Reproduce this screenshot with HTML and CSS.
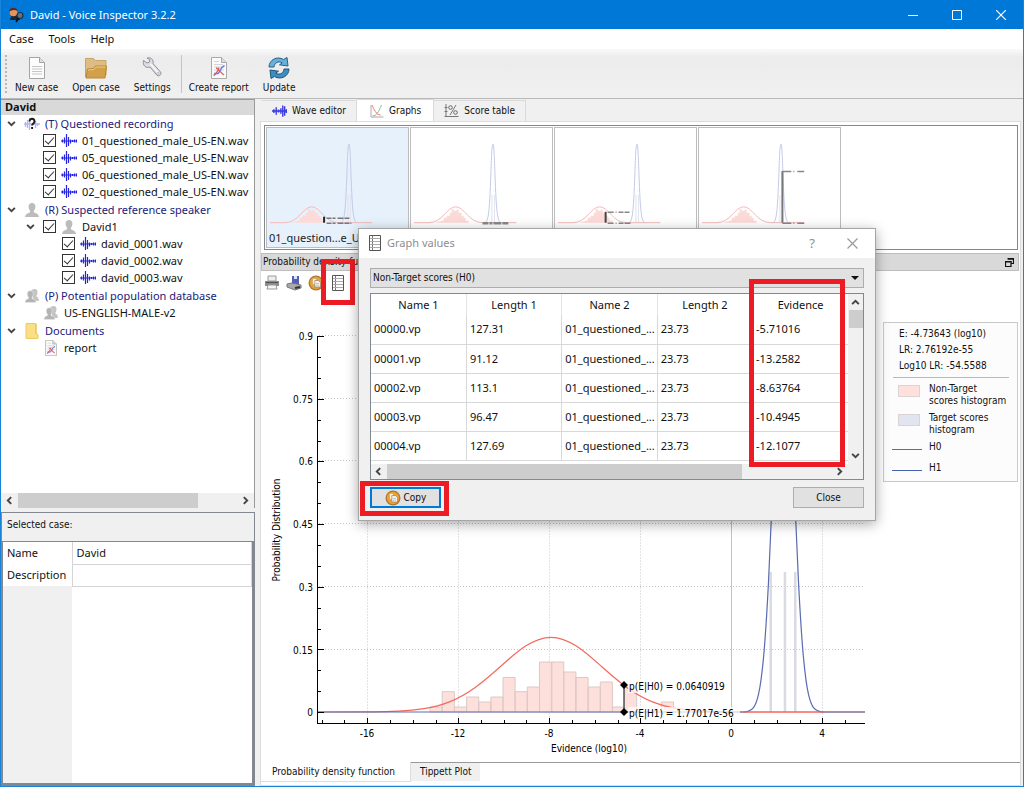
FILE: index.html
```html
<!DOCTYPE html>
<html lang="en">
<head>
<meta charset="utf-8">
<meta name="viewport" content="width=device-width, initial-scale=1">
<title>David - Voice Inspector 3.2.2</title>
<link rel="stylesheet" href="styles.css">
</head>
<body>
<svg class="defs" aria-hidden="true">
  <defs>
    <symbol id="wave" viewBox="0 0 16 14"><path d="M0 7h16M1.500 5.500v3M3.500 3.500v6M5.500 0v13M7.500 3v9M9.500 5.500v4M11.500 6v2M13.500 5.500v3M15.500 5.500v3" fill="none" stroke="#2424dc" stroke-width="1.200"/></symbol>
    <symbol id="wave-tab" viewBox="0 0 16 14"><path d="M0 7h16M2 5v4M4.500 3v8M7 5.500v3M9.500 4v6M11.500 1v12M13.500 2v10M15.300 5v4" fill="none" stroke="#3a3ae0" stroke-width="1.500"/></symbol>
    <symbol id="wave-q" viewBox="0 0 16 14"><path d="M0 7h16M1.500 5v5M3.500 3v8M5.500 1v12M11.500 4v7M13.500 6v3" fill="none" stroke="#b4b4f4" stroke-width="1.300"/><path d="M5.500 4.500c0-3.600 5-3.600 5 0 0 2-2.400 1.900-2.400 4M8.100 10v2" fill="none" stroke="#1c1c1c" stroke-width="1.900"/></symbol>
    <symbol id="person" viewBox="0 0 14 14"><path d="M7 0c2.500 0 3.700 1.700 3.400 4.200-.2 2-1 3-1.500 3.600v1.400c1 1 4.600.9 5.100 4.800H0c.5-3.900 4.100-3.800 5.100-4.800V7.800C4.600 7.200 3.800 6.200 3.600 4.200 3.300 1.700 4.500 0 7 0z" fill="#bcbcbc"/></symbol>
    <symbol id="people" viewBox="0 0 14 14"><path d="M9.500 0c2.400 0 3.200 1.600 3 3.800-.2 1.500-.7 2.300-1 2.700v1c1 .8 2.300 1 2.500 4.200l-5 .5L6 3c.2-1.800 1.500-3 3.500-3z" fill="#c4c4c4"/><path d="M5.200 1.800c2.200 0 3.200 1.500 3 3.500-.1 1.500-.7 2.400-1.200 2.900v1.200c1 .8 3.700.8 4 4.100H0c.3-3.300 2.600-3.300 3.500-4.100V8.200C3 7.700 2.400 6.800 2.300 5.300c-.2-2 .8-3.500 2.900-3.500z" fill="#b4b4b4" stroke="#e8e8e8" stroke-width=".6"/></symbol>
    <symbol id="yellow" viewBox="0 0 13 16"><path d="M.5.500h10v10l2 1v4H.5z" fill="#fbdf86" stroke="#edca61"/><path d="M10.500 1v10" stroke="#e6bf55"/></symbol>
    <symbol id="report" viewBox="0 0 18 22"><path d="M1.500.500h10l5 5v16h-15z" fill="#fafafa" stroke="#a9a9a9"/><path d="M11.500.500v5h5" fill="#ddd" stroke="#a9a9a9"/><path d="M4 4.500h5M4 7.500h9M4 10h10M4 13h10" stroke="#d4d4d4"/><path d="M3.500 18.500c3-1 4-4 5.500-8M6 11c2 0 5 5 8 7" fill="none" stroke="#f05a5a" stroke-width="1.400"/><path d="M4 16.500h4c2-1 2-6 6.500-8" fill="none" stroke="#6680e8" stroke-width="1.400"/></symbol>
    <symbol id="sheet" viewBox="0 0 12 16"><path d="M.5.500h11v15H.5z" fill="#fff" stroke="#555"/><path d="M3.500 1v14" stroke="#777"/><path d="M1 3.500h10M1 6.500h10M1 9.500h10M1 12.500h10" stroke="#aaa"/></symbol>
    <symbol id="copy" viewBox="0 0 16 16"><circle cx="8" cy="8" r="7.500" fill="#a9783a"/><circle cx="8" cy="8" r="6.200" fill="#ee9f30"/><path d="M4.500 3.500h4v6h-4z" fill="#fff0cf" stroke="#c9a36a" stroke-width=".7"/><path d="M6.800 5.500h3.700l2 2v4.500H6.800z" fill="#f3f1ec" stroke="#97846a" stroke-width=".7"/><path d="M8 8.500h3M8 10.200h3" stroke="#aaa" stroke-width=".6"/></symbol>
    <symbol id="thumb" viewBox="0 0 142 100"><path d="M26 95v-1h4v-1h3v-3h3v-2h3v-3h2v-4h2v2h3v-1h2v3h3v3h2v2h2v3h3v2z" fill="#fbdad8"/><path d="M81 67h1v28h-1zM83.500 67h1v28h-1z" fill="#e1e3ee"/><path d="M3 95h15C32 95 36 79 45 79S58 95 72 95h34" fill="none" stroke="#f3b9b9"/><path d="M74 95c4 0 5-10 6.500-50 1-39 3-39 4 0 1.500 40 2.500 50 6.500 50" fill="none" stroke="#c4cae6"/></symbol>
    <symbol id="left" viewBox="0 0 8 8"><path d="M5.500 1l-3 3 3 3" fill="none" stroke="#444" stroke-width="1.700"/></symbol>
    <symbol id="right" viewBox="0 0 8 8"><path d="M2.500 1l3 3-3 3" fill="none" stroke="#444" stroke-width="1.700"/></symbol>
    <symbol id="up" viewBox="0 0 8 8"><path d="M1 5.500l3-3 3 3" fill="none" stroke="#444" stroke-width="1.700"/></symbol>
    <symbol id="down" viewBox="0 0 8 8"><path d="M1 2.500l3 3 3-3" fill="none" stroke="#444" stroke-width="1.700"/></symbol>
  </defs>
</svg>

<div class="window">
  <header class="titlebar">
    <svg class="app-icon" viewBox="0 0 16 16" aria-hidden="true"><path d="M2 13c0-4 3-5 5-5s5 2 5 5z" fill="#1c2733"/><circle cx="5.500" cy="5.500" r="3.800" fill="#e8935a"/><path d="M1 4.500C1 0 9-1 9.500 4 7 2.500 4 3 1 4.500z" fill="#5a2d1a"/><circle cx="12" cy="8.500" r="3" fill="#5d7488" stroke="#26323c" stroke-width="1.200"/><path d="M10.500 11L8 15" stroke="#111" stroke-width="1.800"/></svg>
    <h1 class="title">David - Voice Inspector 3.2.2</h1>
    <div class="win-buttons">
      <button aria-label="Minimize"><svg viewBox="0 0 10 10"><path d="M0 5.500h10" stroke="#fff"/></svg></button>
      <button aria-label="Maximize"><svg viewBox="0 0 10 10"><path d="M.5.500h9v9h-9z" fill="none" stroke="#fff"/></svg></button>
      <button aria-label="Close window"><svg viewBox="0 0 10 10"><path d="M0 0l10 10M10 0L0 10" stroke="#fff" stroke-width="1.200"/></svg></button>
    </div>
  </header>

  <nav class="menu">
    <button>Case</button><button>Tools</button><button>Help</button>
  </nav>

  <div class="toolbar">
    <span class="grip"></span>
    <button class="tool"><svg viewBox="0 0 18 22"><path d="M1.500.500h10l5 5v16h-15z" fill="#fcfcfc" stroke="#a4a4a4"/><path d="M11.500.500v5h5" fill="#e0e0e0" stroke="#a4a4a4"/><path d="M4 9.500h10M4 12h10M4 14.500h10M4 17h10" stroke="#c6c6c6"/></svg>New case</button>
    <button class="tool"><svg class="wide" viewBox="0 0 24 22"><path d="M1.500 20V1.500h8l2 2H22V18z" fill="#dcbd83" stroke="#c9a464"/><path d="M2 21l1.500-9 6-.5 2-2.500H22.500L21 21z" fill="#d3a04a" stroke="#b98636"/><path d="M4 13l6-.5 2-2.500h9.500" fill="none" stroke="#edcb8c"/></svg>Open case</button>
    <button class="tool"><svg viewBox="0 0 20 22"><path d="M1.500 3.500l3.500 2.500 2.500-1 .3-2.700L5 1.200c3.500-1.500 7 1.300 6 5.300l7.500 8.500c1.500 2.500-1.500 5-3.500 3.300L8 10C4 11.500.3 8.500 1.500 3.500z" fill="#dedee4" stroke="#8f8f9a"/><path d="M8.500 7l7.500 8.500" stroke="#fafafa" stroke-width="1.500"/><circle cx="16" cy="16.500" r="1" fill="#fff" stroke="#888" stroke-width=".5"/></svg>Settings</button>
    <span class="tool-sep"></span>
    <button class="tool"><svg><use href="#report"/></svg>Create report</button>
    <button class="tool"><svg viewBox="0 0 22 22"><path d="M1 10C1 3 9-1.500 15.500 2.500L19 .5l1 8.500-8.500-1.200 2.700-2C10 3.500 6.500 6 6 10z" fill="#68b0d8" stroke="#28608a"/><path d="M21 12c0 7-8 11.500-14.500 7.500L3 21.500 2 13l8.500 1.200-2.700 2C12 18.500 15.500 16 16 12z" fill="#3d8cc2" stroke="#235578"/></svg>Update</button>
  </div>

  <div class="main">
    <aside class="side">
      <section class="tree-panel">
        <h2 class="side-title">David</h2>
        <ul class="tree">
          <li class="row group"><svg class="chev"><use href="#down"/></svg><svg class="ico"><use href="#wave-q"/></svg>(T) Questioned recording</li>
          <li class="row lvl1"><label><input type="checkbox" checked><svg class="ico"><use href="#wave"/></svg>01_questioned_male_US-EN.wav</label></li>
          <li class="row lvl1"><label><input type="checkbox" checked><svg class="ico"><use href="#wave"/></svg>05_questioned_male_US-EN.wav</label></li>
          <li class="row lvl1"><label><input type="checkbox" checked><svg class="ico"><use href="#wave"/></svg>06_questioned_male_US-EN.wav</label></li>
          <li class="row lvl1"><label><input type="checkbox" checked><svg class="ico"><use href="#wave"/></svg>02_questioned_male_US-EN.wav</label></li>
          <li class="row group"><svg class="chev"><use href="#down"/></svg><svg class="ico"><use href="#person"/></svg>(R) Suspected reference speaker</li>
          <li class="row lvl-person"><svg class="chev"><use href="#down"/></svg><label><input type="checkbox" checked><svg class="ico"><use href="#person"/></svg>David1</label></li>
          <li class="row lvl2"><label><input type="checkbox" checked><svg class="ico"><use href="#wave"/></svg>david_0001.wav</label></li>
          <li class="row lvl2"><label><input type="checkbox" checked><svg class="ico"><use href="#wave"/></svg>david_0002.wav</label></li>
          <li class="row lvl2"><label><input type="checkbox" checked><svg class="ico"><use href="#wave"/></svg>david_0003.wav</label></li>
          <li class="row group"><svg class="chev"><use href="#down"/></svg><svg class="ico"><use href="#people"/></svg>(P) Potential population database</li>
          <li class="row leaf"><svg class="ico"><use href="#people"/></svg>US-ENGLISH-MALE-v2</li>
          <li class="row group"><svg class="chev"><use href="#down"/></svg><svg class="ico tall"><use href="#yellow"/></svg>Documents</li>
          <li class="row leaf"><svg class="ico tall"><use href="#report"/></svg>report</li>
        </ul>
        <div class="hscroll"><svg><use href="#left"/></svg><span class="track"><span class="thumb side-thumb"></span></span><svg><use href="#right"/></svg></div>
      </section>
      <section class="case-panel">
        <h2 class="case-title">Selected case:</h2>
        <div class="case-box">
          <table class="case-table">
            <tr><th scope="row">Name</th><td>David</td></tr>
            <tr><th scope="row">Description</th><td></td></tr>
          </table>
        </div>
      </section>
    </aside>

    <section class="work">
      <div class="tabs" role="tablist">
        <button role="tab" class="tab"><svg><use href="#wave-tab"/></svg>Wave editor</button>
        <button role="tab" class="tab active" aria-selected="true"><svg viewBox="0 0 14 14"><path d="M1.500 1v12H14" fill="none" stroke="#aaa"/><path d="M3 12c4 0 6-4 9-11" fill="none" stroke="#7fc08f"/><path d="M2.500 1c2 4 4 10 8.500 10" fill="none" stroke="#ef7777"/></svg>Graphs</button>
        <button role="tab" class="tab"><svg viewBox="0 0 14 14"><path d="M1.500 0v13M0 12.500h14M0 3.500h3M0 7.500h3M11.500 1l-6 10" fill="none" stroke="#777"/><circle cx="6" cy="3.500" r="1.800" fill="none" stroke="#666"/><circle cx="11" cy="8.500" r="1.800" fill="none" stroke="#666"/></svg>Score table</button>
      </div>

      <div class="page">
        <div class="thumbs">
          <figure class="card selected"><svg viewBox="0 0 142 100"><use href="#thumb"/><path d="M57.500 89v6" stroke="#222" stroke-width="2"/><path d="M60 90.500h23M60 95.500h25" stroke="#777" stroke-width="1.500" stroke-dasharray="5 1 3 2 6 1"/></svg><figcaption>01_question...e_US-EN</figcaption></figure>
          <figure class="card"><svg viewBox="0 0 142 100"><use href="#thumb"/><path d="M72 95.500h26" stroke="#888" stroke-width="2.500" stroke-dasharray="6 1 3 1 8 1"/></svg></figure>
          <figure class="card"><svg viewBox="0 0 142 100"><use href="#thumb"/><path d="M51 84v11" stroke="#444" stroke-width="2"/><path d="M53 84.500h22M53 95.500h25" stroke="#888" stroke-width="1.500" stroke-dasharray="6 2 1 2 5 1"/></svg></figure>
          <figure class="card"><svg viewBox="0 0 142 100"><use href="#thumb"/><path d="M84 43v52" stroke="#777" stroke-width="2"/><path d="M84 43.500h22M84 95.500h22" stroke="#888" stroke-width="1.500" stroke-dasharray="9 2 1 3 8 1"/></svg></figure>
        </div>

        <div class="dock-title"><h2>Probability density function</h2><button aria-label="Float panel"><svg viewBox="0 0 9 9"><path d="M3 1h5.500v4.500H6M.500 3.500h5.500v5H.500z" fill="none" stroke="#111" stroke-width="1.200"/><path d="M2.500.800h6.500M0 3.700h6.500" stroke="#111" stroke-width="1.600"/></svg></button></div>

        <div class="chart-tools">
          <button aria-label="Print"><svg viewBox="0 0 16 16"><path d="M4 1h8v5H4z" fill="#eee" stroke="#999"/><path d="M1 6h14v5H1z" fill="#8b8b8b"/><path d="M2 7.500h12" stroke="#555"/><path d="M4 10h8l1 4H3z" fill="#f5f5f5" stroke="#999"/></svg></button>
          <button aria-label="Save"><svg viewBox="0 0 16 16"><path d="M6 1h7v8H6z" fill="#5560b5"/><path d="M8 1h3v3H8z" fill="#dfe2ff"/><path d="M1 9l5-1 9 2v3l-6 2-8-3z" fill="#a9a9a9" stroke="#777"/><path d="M9 13l5-1" stroke="#333" stroke-width="2"/></svg></button>
          <button aria-label="Copy graph"><svg><use href="#copy"/></svg></button>
          <button aria-label="Graph values" class="marked"><svg class="sheet-ico"><use href="#sheet"/></svg></button>
        </div>

        <div class="chart-area">
          <svg class="chart" viewBox="261 294 620 468" preserveAspectRatio="xMinYMin meet" role="img" aria-label="Probability density">
            <path d="M319 336H865M319 399H865M319 461H865M319 524H865M319 587H865M319 650H865M367.500 336V723M458.500 336V723M549.500 336V723M640.500 336V723M822.500 336V723" class="grid" transform="translate(0 -.5)"/>
            <path d="M731.500 336V723" stroke="#c4c4c4"/>
            <path class="bars" d="M430 712v-5h12.200v5zM442.200 712v-20.300h12.200V712zM454.400 712v-5h12.200v5zM466.600 712v-15h12.100v15zM478.700 712v-10h12.200v10zM490.900 712v-15h12.100v15zM503 712v-34.500h12.100V712zM515.100 712v-20.300h12.200V712zM527.300 712v-25h12.200v25zM539.500 712v-50h12.200v50zM551.700 712v-50h12.100v50zM563.800 712v-40h12.100v40zM575.900 712v-34.500h12.200V712zM588.100 712v-25h12.200v25zM600.300 712v-30h12.100v30zM612.400 712v-5h12.100v5zM624.500 712v-25h12.200v25zM661.300 712v-10h12.200v10z"/>
            <path d="M769.500 572h2.500v140h-2.500zM783.700 572h2.500v140h-2.500zM794 572h2.500v140H794z" fill="#d9dae2"/>
            <path class="h0" d="M318 712L373.200 711.800C381.700 711.800 390.100 711.600 398.600 711.200S415.500 710.100 424 708.700 440.900 705.300 449.400 701.900 466.300 693.800 474.800 687.700 491.700 674.300 500.200 666.700 517.100 651.600 525.600 646.100 542.500 637.300 551 637.300 567.900 640.600 576.400 646.100 593.300 659.200 601.800 666.700 618.700 681.600 627.200 687.700 644.100 698.500 652.600 701.900 669.500 707.300 678 708.700 694.900 710.800 703.400 711.200 720.300 711.900 728.800 712L865 712"/>
            <path class="h1" d="M318 712L743.500 712C745.200 712 746.800 711.600 748.500 711.100S751.800 709.800 753.500 707.600 756.800 701.700 758.500 694.400 761.800 675.900 763.500 657.900 766.800 614.600 768.500 582.100 771.800 509.800 773.500 469.400 776.800 388.400 778.500 359 781.800 312 783.500 312 786.800 329.600 788.500 359 791.800 429 793.500 469.400 796.800 549.600 798.500 582.100 801.800 639.900 803.500 657.900 806.800 687.100 808.500 694.400 811.800 705.400 813.500 707.600 816.800 710.600 818.500 711.100 821.800 712 823.500 712L865 712"/>
            <path d="M743 712H824" stroke="#f4665a" stroke-width="1.200"/>
            <path d="M628 680h102v13H628zM628 707h112v12H628z" fill="#fff" fill-opacity=".75"/>
            <path d="M624 685v27" stroke="#555" stroke-width="1.500"/>
            <path d="M624 681l4 4-4 4-4-4zM624 708l4 4-4 4-4-4z" fill="#000"/>
            <path class="axis" d="M323.500 336.500H317.500V723.500H865M318 399h6M318 461.500h6M318 524.500h6M318 587h6M318 649.500h6M318 712h6"/>
            <path class="axis" d="M318 357h3M318 378h3M318 420h3M318 441h3M318 482h3M318 503h3M318 545h3M318 566h3M318 608h3M318 629h3M318 670.500h3M318 691h3M367.500 718v5M458.500 718v5M549.500 718v5M640.500 718v5M731.500 718v5M822.500 718v5M322 720v3M344.500 720v3M390 720v3M413 720v3M436 720v3M481 720v3M504 720v3M526.500 720v3M572 720v3M595 720v3M618 720v3M663 720v3M686 720v3M708.500 720v3M754 720v3M777 720v3M800 720v3M845.500 720v3"/>
            <g class="lab" text-anchor="end"><text x="313" y="340">0.9</text><text x="313" y="403">0.75</text><text x="313" y="465">0.6</text><text x="313" y="528">0.45</text><text x="313" y="591">0.3</text><text x="313" y="654">0.15</text><text x="313" y="716">0</text></g>
            <g class="lab" text-anchor="middle"><text x="367" y="737">-16</text><text x="458" y="737">-12</text><text x="549" y="737">-8</text><text x="640" y="737">-4</text><text x="731" y="737">0</text><text x="822" y="737">4</text><text x="589" y="752">Evidence (log10)</text><text transform="translate(280 530) rotate(-90)">Probability Distribution</text></g>
            <g class="lab"><text x="629" y="690">p(E|H0) = 0.0640919</text><text x="629" y="717">p(E|H1) = 1.77017e-56</text></g>
          </svg>
          <aside class="legend">
            <p>E: -4.73643 (log10)</p><p>LR: 2.76192e-55</p><p>Log10 LR: -54.5588</p>
            <ul class="keys">
              <li><span class="swatch pink"></span><span>Non-Target<br>scores histogram</span></li>
              <li><span class="swatch lilac"></span><span>Target scores<br>histogram</span></li>
              <li class="short"><span class="line line-h0"></span><span>H0</span></li>
              <li class="short"><span class="line line-h1"></span><span>H1</span></li>
            </ul>
          </aside>
        </div>

        <div class="bottom-tabs" role="tablist">
          <button role="tab" class="btab on" aria-selected="true">Probability density function</button>
          <button role="tab" class="btab">Tippett Plot</button>
        </div>
      </div>
    </section>
  </div>

  <div class="dialog" role="dialog" aria-labelledby="dlg-title">
    <header class="dlg-bar">
      <svg class="sheet-ico"><use href="#sheet"/></svg><h2 id="dlg-title">Graph values</h2>
      <button aria-label="Help on this dialog" class="q">?</button>
      <button aria-label="Close dialog"><svg viewBox="0 0 11 11"><path d="M.5.500l10 10M10.500.500l-10 10" stroke="#999" stroke-width="1.200"/></svg></button>
    </header>
    <div class="dlg-body">
      <div class="combo"><select aria-label="Score set"><option>Non-Target scores (H0)</option></select></div>
      <div class="grid-box">
        <div class="grid-view">
          <table class="values">
            <thead><tr><th>Name 1</th><th>Length 1</th><th>Name 2</th><th>Length 2</th><th>Evidence</th></tr></thead>
            <tbody>
              <tr><td>00000.vp</td><td>127.31</td><td>01_questioned_...</td><td>23.73</td><td>-5.71016</td></tr>
              <tr><td>00001.vp</td><td>91.12</td><td>01_questioned_...</td><td>23.73</td><td>-13.2582</td></tr>
              <tr><td>00002.vp</td><td>113.1</td><td>01_questioned_...</td><td>23.73</td><td>-8.63764</td></tr>
              <tr><td>00003.vp</td><td>96.47</td><td>01_questioned_...</td><td>23.73</td><td>-10.4945</td></tr>
              <tr><td>00004.vp</td><td>127.69</td><td>01_questioned_...</td><td>23.73</td><td>-12.1077</td></tr>
            </tbody>
          </table>
          <div class="vscroll"><svg><use href="#up"/></svg><span class="vthumb"></span><svg class="end"><use href="#down"/></svg></div>
        </div>
        <div class="hscroll dlg-scroll"><svg><use href="#left"/></svg><span class="track"><span class="thumb dlg-thumb"></span></span><svg><use href="#right"/></svg></div>
      </div>
      <div class="dlg-foot">
        <button class="btn primary"><svg><use href="#copy"/></svg>Copy</button>
        <button class="btn">Close</button>
      </div>
    </div>
    <span class="mark mark-evidence"></span>
    <span class="mark mark-copy"></span>
  </div>
</div>
</body>
</html>
```

FILE: styles.css
```css
:root {
  --ui: "Noto Sans", "Open Sans", sans-serif;
  --plot: "DejaVu Sans Condensed", "DejaVu Sans", sans-serif;
  --face: #f0f0f0;
  --edge: #828790;
  --red: #ed1c24;
}
*, *::before, *::after { box-sizing: border-box; }
body { margin: 0; font: 11px/16px var(--ui); color: #111; background: var(--face); }
h1, h2, p, ul, figure { margin: 0; padding: 0; font-size: inherit; font-weight: normal; }
ul { list-style: none; }
button { font: inherit; color: inherit; background: none; border: 0; padding: 0; margin: 0; }
svg { display: block; flex: none; }
.defs { position: absolute; width: 0; height: 0; }

.window { position: relative; display: flex; flex-direction: column; min-height: 100vh; border: 1px solid #1883d7; border-top: 0; }
.titlebar { display: flex; align-items: center; gap: 6px; height: 29px; padding-left: 7px; background: #0078d7; color: #fff; }
.app-icon { width: 16px; height: 16px; }
.title { flex: 1; font-size: 11px; }
.win-buttons { display: flex; }
.win-buttons button { display: grid; place-items: center; width: 44px; height: 29px; }
.win-buttons svg { width: 10px; height: 10px; }

.menu { display: flex; gap: 15px; height: 20px; padding-left: 8px; align-items: center; background: #fff; }
.toolbar { display: flex; gap: 14px; height: 49px; padding: 8px 0 3px 4px; background: linear-gradient(#fafafa, #ececec 8px, #f0f0f0); font: 10px/14px var(--plot); }
.grip { width: 3px; margin: -2px -7px 2px 0; border-left: 2px dotted #b8b8b8; }
.tool { display: flex; flex-direction: column; align-items: center; justify-content: space-between; white-space: nowrap; }
.tool svg { width: 22px; height: 22px; }
.tool .wide { width: 24px; }
.tool-sep { width: 1px; margin: -2px -7px 2px -4px; background: #c4c4c4; }

.main { flex: 1; display: flex; gap: 5px; border-top: 1px solid #b8b8b8; }
.side { flex: none; width: 254px; display: flex; flex-direction: column; gap: 4px; }
.tree-panel { flex: 1; display: flex; flex-direction: column; border: 1px solid #9a9a9a; border-left: 0; border-bottom: 0; background: #fff; }
.side-title { height: 15px; padding-left: 4px; font-weight: bold; line-height: 14px; background: #d9d9d9; }
.tree { flex: 1; }
.row { display: flex; align-items: center; height: 17px; padding-left: 6px; white-space: nowrap; }
.row label { display: flex; align-items: center; }
.group { margin-top: 1px; color: #20207c; }
.group:first-child { margin-top: 0; }
.chev { width: 9px; height: 9px; margin-right: 8px; }
.ico { width: 16px; height: 14px; margin-right: 5px; }
.ico.tall { height: 16px; }
.lvl1 { padding-left: 42px; }
.lvl2 { padding-left: 61px; }
.lvl-person { padding-left: 25px; }
.leaf { padding-left: 42px; }
.row input { appearance: none; position: relative; width: 13px; height: 13px; margin: 0 5px 0 0; border: 1px solid #333; background: #fff; }
.row input:checked::after { content: ""; position: absolute; left: 1px; top: 2px; width: 9px; height: 5px; border: solid #333; border-width: 0 0 1px 1px; transform: rotate(-48deg); }

.hscroll { display: flex; align-items: center; height: 15px; padding: 0 4px; background: var(--face); }
.hscroll svg { width: 9px; height: 9px; }
.track { flex: 1; height: 15px; margin: 0 4px; }
.thumb { display: block; height: 15px; background: #cdcdcd; }
.side-thumb { width: 82%; }

.case-panel { display: flex; flex-direction: column; height: 274px; border: 1px solid var(--edge); }
.case-title { height: 28px; padding: 4px 5px; font: 10px/16px var(--plot); }
.case-box { flex: 1; border: 1px solid var(--edge); border-width: 1px 2px 2px 1px; background: linear-gradient(90deg, #f0f0f0 69px, #fff 69px); }
.case-table { width: 100%; border-collapse: collapse; }
.case-table th { width: 69px; height: 22px; padding: 0 4px; font-weight: normal; text-align: left; background: #fff; }
.case-table td { height: 22px; padding: 0 4px; border: 1px solid #d4d4d4; border-top: 0; background: #fff; }

.work { flex: 1; min-width: 0; display: flex; flex-direction: column; padding-right: 2px; }
.tabs { display: flex; height: 22px; padding-left: 2px; align-items: flex-end; font: 10px/16px var(--plot); }
.tab { display: flex; align-items: center; gap: 5px; height: 21px; padding: 0 10px; border: 1px solid #d9d9d9; border-bottom: 0; border-left-width: 0; white-space: nowrap; }
.tab svg { width: 15px; height: 14px; }
.tab.active { height: 22px; padding: 0 12px; background: #fff; }
.page { flex: 1; display: flex; flex-direction: column; border: 1px solid #dcdcdc; background: #fff; }
.thumbs { display: flex; gap: 1px; height: 125px; margin: 3px 2px 0 3px; padding: 1px; border: 1px solid var(--edge); }
.card { width: 143px; border: 1px solid #bdbdbd; color: #222; }
.card svg { width: 100%; height: 100px; }
.card.selected { background: #e6f1fb; }
.card figcaption { padding: 2px; white-space: nowrap; }
.dock-title { display: flex; align-items: center; justify-content: space-between; height: 18px; margin: 3px 1px 0 0; padding: 0 4px 0 1px; border: 1px solid #bdbdbd; background: #d9d9d9; font: 10px/16px var(--plot); }
.dock-title svg { width: 9px; height: 9px; }
.chart-tools { display: flex; gap: 6px; height: 23px; padding: 4px 3px 3px; }
.chart-tools button { display: grid; place-items: center; width: 16px; height: 16px; }
.chart-tools svg { width: 16px; height: 16px; }
svg.sheet-ico, .chart-tools svg.sheet-ico { width: 12px; height: 16px; }
.chart-tools .marked { position: relative; }
.marked::after { content: ""; position: absolute; left: -9px; top: -16px; width: 34px; height: 46px; border: 5px solid var(--red); }

.chart-area { flex: 1; display: flex; align-items: flex-start; }
.chart { flex: 1; min-width: 0; width: 100%; max-width: 620px; height: 468px; }
.grid { fill: none; stroke: #c6c6c6; stroke-dasharray: 1 2; }
.bars { fill: rgba(252, 216, 210, .8); stroke: #dcc8c6; stroke-width: 1; }
.h0 { fill: none; stroke: #f4695c; stroke-width: 1.2; }
.h1 { fill: none; stroke: #5a6cb0; stroke-width: 1.2; }
.axis { fill: none; stroke: #000; shape-rendering: crispEdges; }
.lab { font: 10px var(--plot); fill: #000; }
.legend { flex: none; width: 135px; height: 160px; margin: 28px 2px 0 auto; padding: 3px 10px 0 15px; border: 1px solid #c9c9c9; background: #fcfcfc; font: 10px/16px var(--plot); white-space: nowrap; }
.keys { margin: 3px -2px 0 -6px; padding-top: 5px; border-top: 1px solid #b9b9b9; }
.keys li { display: flex; gap: 9px; margin-left: 5px; margin-bottom: 5px; line-height: 12px; }
.keys .short { margin: 0 0 9px -1px; gap: 7px; }
.swatch { flex: none; width: 22px; height: 12px; margin-top: 2px; border: 1px solid #dcd4d4; }
.pink { background: #ffe0dc; }
.lilac { background: #e2e4f0; }
.line { flex: none; width: 30px; height: 9px; }
.line-h0 { border-bottom: 1px solid #f0382c; }
.line-h1 { border-bottom: 1px solid #4a60b0; }

.bottom-tabs { display: flex; align-items: flex-start; height: 23px; font: 10px/18px var(--plot); }
.bottom-tabs::after { content: ""; flex: 1; border-top: 1px solid #999; }
.btab { height: 19px; padding: 0 9px; background: var(--face); border-top: 1px solid #999; white-space: nowrap; }
.btab.on { height: 20px; padding: 0 15px 0 11px; background: #fff; border: solid #ddd; border-width: 0 1px 1px 0; }

.dialog { position: absolute; left: 357px; top: 228px; width: 518px; border: 1px solid #a5a5a5; background: var(--face); box-shadow: 0 3px 12px rgba(0, 0, 0, .35); }
.dlg-bar { display: flex; align-items: center; height: 29px; padding: 0 17px 1px 10px; background: #fff; color: #8d8d8d; }
.dlg-bar h2 { flex: 1; margin-left: 6px; }
.dlg-bar button { margin-left: 32px; }
.dlg-bar .q { font-size: 13px; }
.dlg-bar button svg { width: 11px; height: 11px; }
.dlg-body { padding: 10px 11px 12px; }
.combo { position: relative; border: 1px solid #adadad; background: #e1e1e1; }
.combo select { appearance: none; display: block; width: 100%; height: 18px; padding: 0 2px; border: 0; background: none; color: #111; font: 10px/16px var(--plot); }
.combo::after { content: ""; position: absolute; right: 4px; top: 7px; border: 4px solid transparent; border-top-color: #111; border-bottom: 0; pointer-events: none; }
.grid-box { margin-top: 5px; border: 1px solid var(--edge); background: #fff; }
.grid-view { display: flex; height: 170px; overflow: hidden; align-items: flex-start; }
.values { flex: 1; width: 100%; border-collapse: collapse; table-layout: fixed; }
.values th { height: 21px; padding: 0; font-weight: normal; border-right: 1px solid #e5e5e5; }
.values td { height: 29px; padding: 0 3px; border-right: 1px solid #d8d8d8; border-bottom: 1px solid #d8d8d8; white-space: nowrap; }
.values th:last-child, .values td:last-child { border-right: 0; }
.vscroll { flex: none; display: flex; flex-direction: column; align-items: center; align-self: stretch; width: 15px; padding: 4px 0; background: var(--face); }
.vscroll svg { width: 9px; height: 9px; }
.vscroll .end { margin-top: auto; }
.vthumb { width: 14px; height: 18px; margin-top: 3px; background: #cdcdcd; }
.dlg-scroll { padding: 0 19px 0 3px; }
.dlg-thumb { width: 80%; }
.dlg-foot { display: flex; justify-content: space-between; margin-top: 7px; }
.btn { display: flex; align-items: center; justify-content: center; gap: 3px; width: 71px; height: 21px; border: 1px solid #adadad; background: #e1e1e1; font: 10px/16px var(--plot); }
.btn.primary { border: 2px solid #0078d7; }
.btn svg { width: 16px; height: 16px; }
.mark { position: absolute; border: 5px solid var(--red); pointer-events: none; }
.mark-evidence { right: 30px; top: 50px; width: 96px; height: 188px; }
.mark-copy { left: 1px; bottom: 4px; width: 89px; height: 35px; }
```
